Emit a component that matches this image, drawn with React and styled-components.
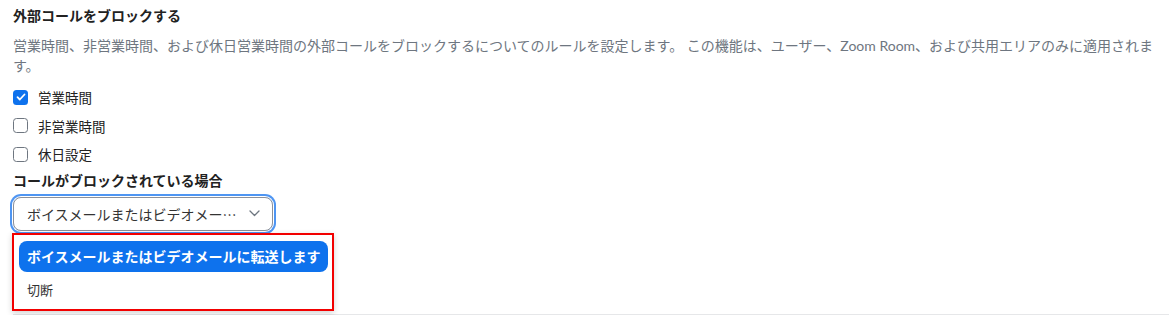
import React from "react";
import styled, { createGlobalStyle } from "styled-components";

const Global = createGlobalStyle`
  html, body { margin: 0; padding: 0; background: #fff; }
  body { font-family: Lato, "Noto Sans CJK JP", sans-serif; color: #222; }
`;

const Section = styled.section`
  margin-left: 13px;
  padding: 6px 0 3px 0;
  border-bottom: 1px solid #e6e7e9;
`;

const Title = styled.h3`
  margin: 0;
  font-size: 14px;
  line-height: 20px;
  font-weight: 700;
  color: #222;
`;

const Desc = styled.p`
  margin: 10px 0 0 0;
  padding-right: 6px;
  font-size: 14px;
  line-height: 20px;
  color: #6e7680;
`;

const CheckList = styled.div`
  margin-top: 7px;
  display: flex;
  flex-direction: column;
`;

const CheckRow = styled.label`
  display: flex;
  align-items: center;
  gap: 10px;
  height: 28.5px;
  font-size: 13.5px;
  color: #222;
`;

const Box = styled.span`
  width: 15px;
  height: 15px;
  box-sizing: border-box;
  border-radius: 3.5px;
  display: flex;
  align-items: center;
  justify-content: center;
  background: ${(p) => (p.$checked ? "#0e72ed" : "#fff")};
  border: ${(p) => (p.$checked ? "none" : "1.5px solid #6e7680")};
`;

const SubTitle = styled.h4`
  margin: 2px 0 0 0;
  font-size: 14px;
  line-height: 20px;
  font-weight: 700;
  color: #222;
`;

const Select = styled.div`
  margin-top: 6px;
  width: 260px;
  height: 34px;
  box-sizing: border-box;
  border: 1px solid #8c9099;
  border-radius: 8px;
  box-shadow: 0 0 0 1px #fff, 0 0 0 3px #4e95f2;
  display: flex;
  align-items: center;
  gap: 10px;
  padding: 0 12px 0 13px;
`;

const SelectText = styled.span`
  flex: 1;
  min-width: 0;
  white-space: nowrap;
  overflow: hidden;
  text-overflow: ellipsis;
  font-family: "Noto Sans CJK JP", sans-serif;
  font-size: 14px;
  color: #333;
`;

const Menu = styled.div`
  margin-top: 2px;
  margin-left: -1px;
  width: 322px;
  box-sizing: border-box;
  border: 2px solid #f20000;
  background: #fff;
  box-shadow: 0 2px 6px rgba(0, 0, 0, 0.18);
  padding: 6px 4px 4px 5px;
  display: flex;
  flex-direction: column;
  gap: 2px;
`;

const Option = styled.div`
  height: 31px;
  display: flex;
  align-items: center;
  padding-left: 8px;
  border-radius: 8px;
  font-size: ${(p) => (p.$active ? "14px" : "13px")};
  font-weight: ${(p) => (p.$active ? 700 : 400)};
  background: ${(p) => (p.$active ? "#0e72ed" : "transparent")};
  color: ${(p) => (p.$active ? "#fff" : "#333")};
  white-space: nowrap;
`;

const Check = ({ checked, label }) => (
  <CheckRow>
    <Box $checked={checked}>
      {checked && (
        <svg width="10" height="8" viewBox="0 0 10 8">
          <path d="M1.5 4.2l2.3 2.3L8.5 1.5" fill="none" stroke="#fff" strokeWidth="1.8" strokeLinecap="round" strokeLinejoin="round" />
        </svg>
      )}
    </Box>
    {label}
  </CheckRow>
);

export default function App() {
  return (
    <>
      <Global />
      <Section>
        <Title>外部コールをブロックする</Title>
        <Desc>
          営業時間、非営業時間、および休日営業時間の外部コールをブロックするについてのルールを設定します。 この機能は、ユーザー、Zoom Room、および共用エリアのみに適用されます。
        </Desc>
        <CheckList>
          <Check checked label="営業時間" />
          <Check label="非営業時間" />
          <Check label="休日設定" />
        </CheckList>
        <SubTitle>コールがブロックされている場合</SubTitle>
        <Select>
          <SelectText>ボイスメールまたはビデオメールに転送します</SelectText>
          <svg width="11" height="7" viewBox="0 0 11 7">
            <path d="M1 1l4.5 4.5L10 1" fill="none" stroke="#6e7680" strokeWidth="1.3" strokeLinecap="round" strokeLinejoin="round" />
          </svg>
        </Select>
        <Menu>
          <Option $active>ボイスメールまたはビデオメールに転送します</Option>
          <Option>切断</Option>
        </Menu>
      </Section>
    </>
  );
}
